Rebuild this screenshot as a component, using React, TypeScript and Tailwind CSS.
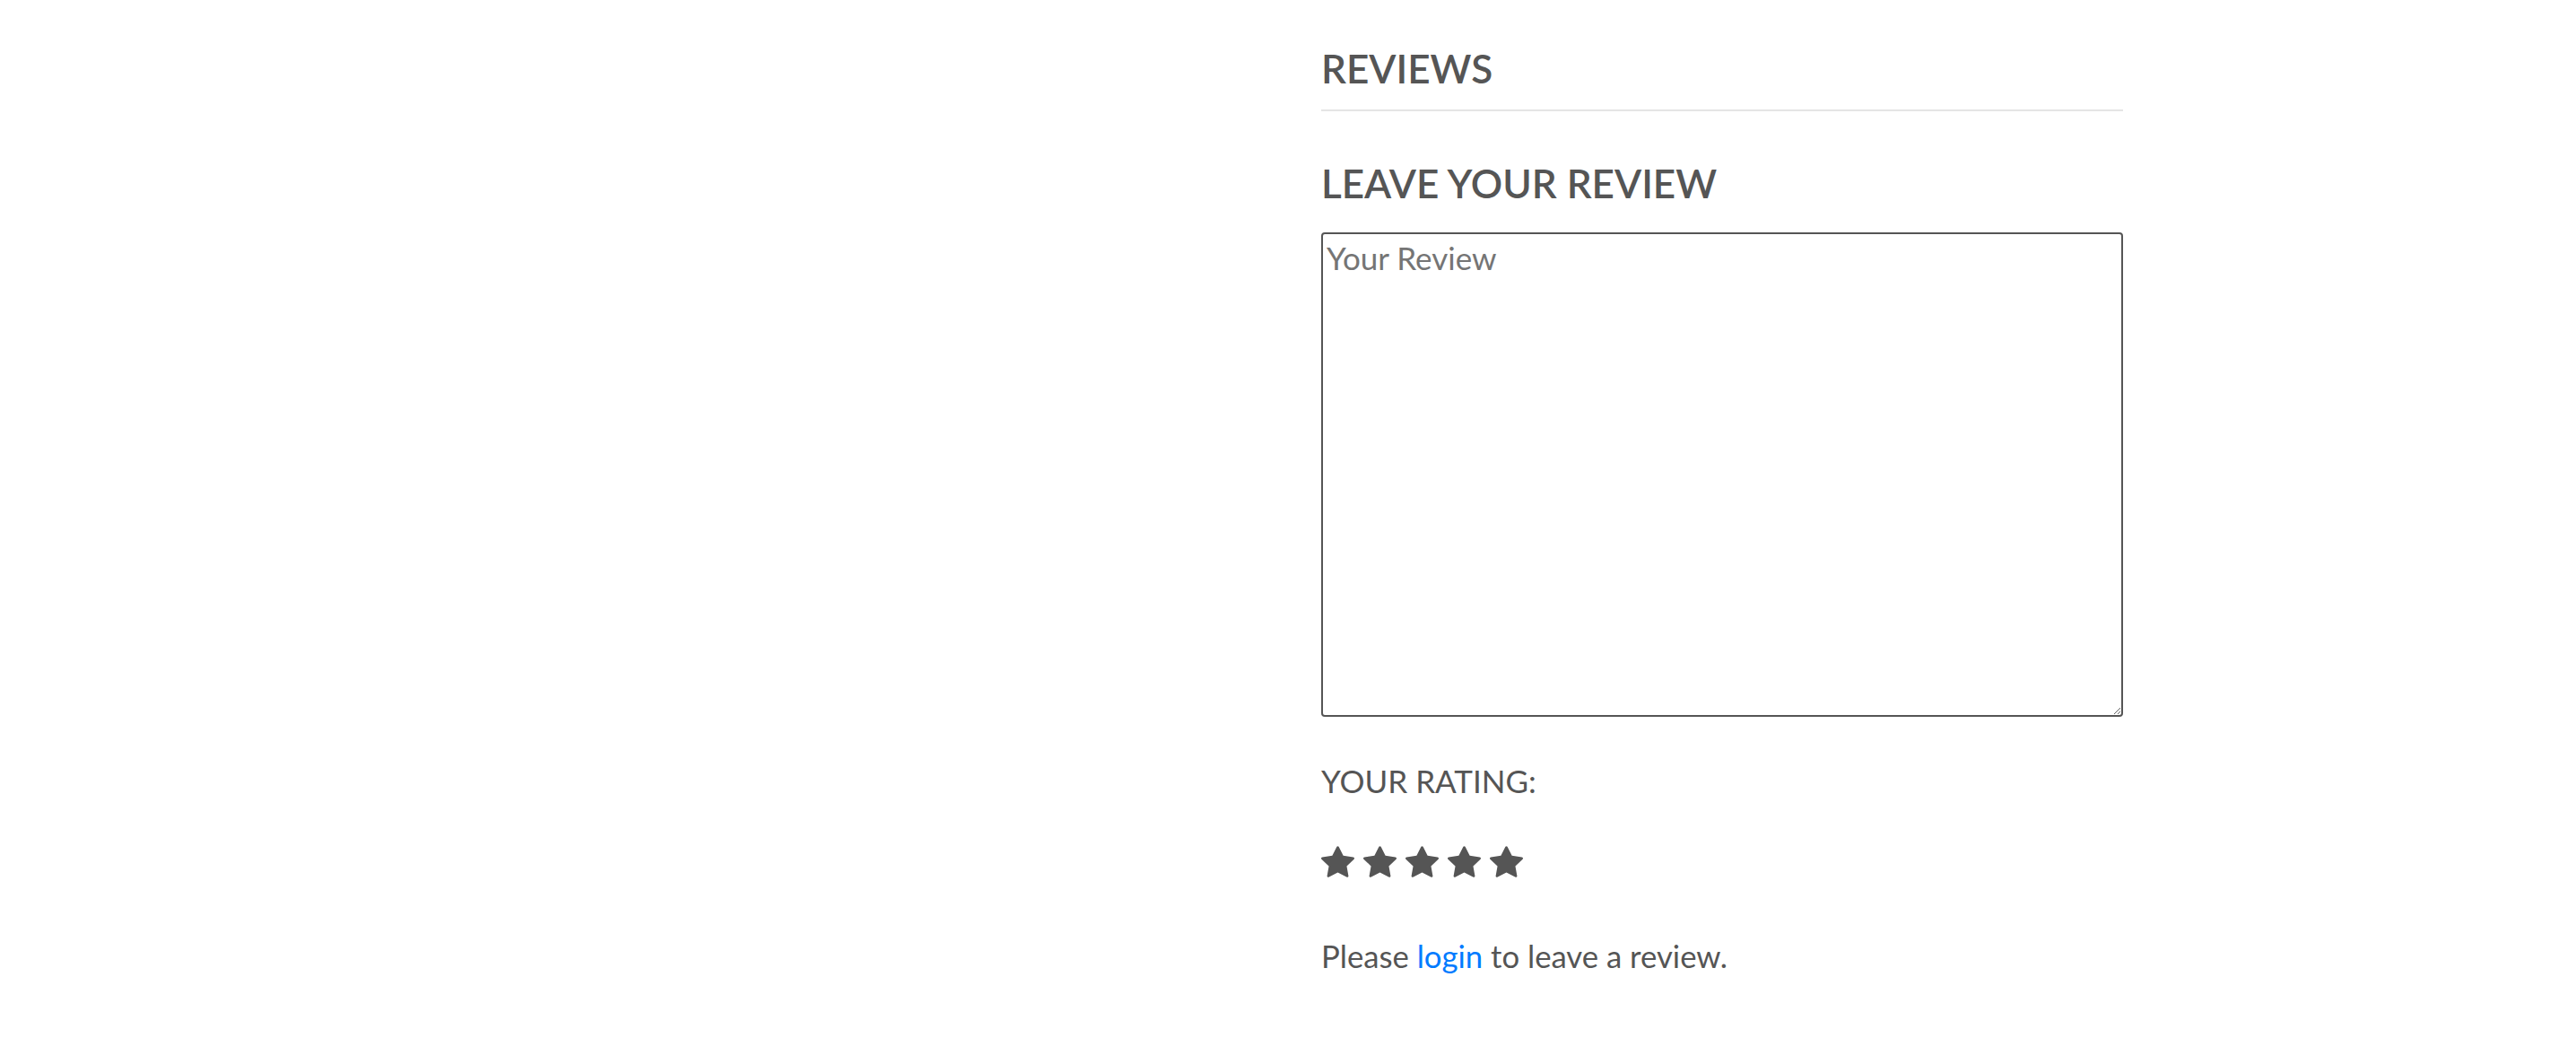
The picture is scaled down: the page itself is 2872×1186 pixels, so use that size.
import React from "react";
import { BsStarFill } from "react-icons/bs";

export default function App() {
  return (
    <div className="min-h-[1186px] w-full bg-white text-[#555555]" style={{ fontFamily: "Lato, 'Noto Sans', sans-serif" }}>
      <div className="ml-[1473px] w-[894px] pt-[54px]">
        <div className="border-b-2 border-[#e5e5e5] pb-[24px]">
          <h2 className="text-[44px] font-semibold leading-none">REVIEWS</h2>
        </div>
        <h3 className="mt-[58px] text-[44px] font-semibold leading-none">LEAVE YOUR REVIEW</h3>
        <textarea
          placeholder="Your Review"
          className="mt-[33px] block h-[540px] w-full rounded-[4px] border-2 border-[#555555] px-[4px] py-[5px] text-[35px] leading-[1.2] text-[#555555] placeholder:text-[#757575]"
          style={{ fontFamily: "Lato, 'Noto Sans', sans-serif" }}
        />
        <div className="mt-[54px] text-[35px] leading-none">YOUR RATING:</div>
        <div className="mt-[54px] flex gap-[10px] text-[#555555]">
          <BsStarFill size={37} />
          <BsStarFill size={37} />
          <BsStarFill size={37} />
          <BsStarFill size={37} />
          <BsStarFill size={37} />
        </div>
        <p className="mt-[70px] text-[34.7px] leading-none">
          Please <a href="#" className="text-[#007bff]">login</a> to leave a review.
        </p>
      </div>
    </div>
  );
}
